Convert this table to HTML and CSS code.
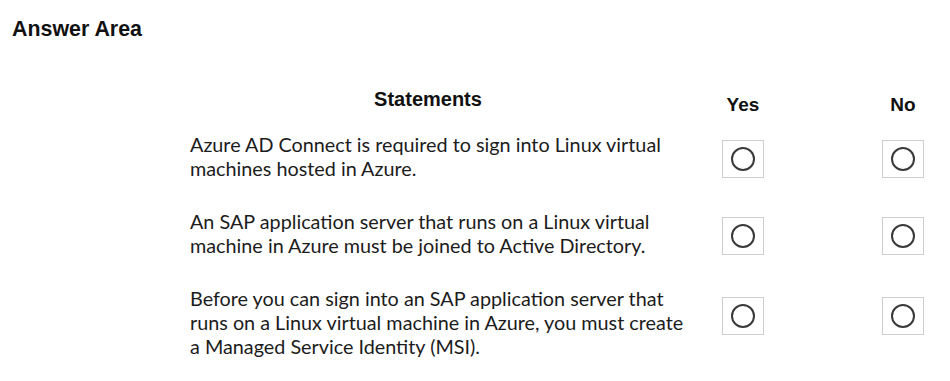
FILE: index.html
```html
<!DOCTYPE html>
<html lang="en">
<head>
	<meta charset="UTF-8">
	<title>Answer Area</title>
	<link rel="stylesheet" href="styles.css">
</head>
<body>

<div class="answer-area">
	<h1 class="title">Answer Area</h1>

	<div class="board">
		<!-- header row -->
		<div class="head statements">Statements</div>
		<div class="head choice">Yes</div>
		<div></div>
		<div class="head choice">No</div>

		<!-- statement 1 -->
		<p class="statement">Azure AD Connect is required to sign into Linux virtual<br>machines hosted in Azure.</p>
		<label class="radio-box"><span class="circle"></span></label>
		<div></div>
		<label class="radio-box"><span class="circle"></span></label>

		<!-- statement 2 -->
		<p class="statement">An SAP application server that runs on a Linux virtual<br>machine in Azure must be joined to Active Directory.</p>
		<label class="radio-box"><span class="circle"></span></label>
		<div></div>
		<label class="radio-box"><span class="circle"></span></label>

		<!-- statement 3 -->
		<p class="statement">Before you can sign into an SAP application server that<br>runs on a Linux virtual machine in Azure, you must create<br>a Managed Service Identity (MSI).</p>
		<label class="radio-box up"><span class="circle"></span></label>
		<div></div>
		<label class="radio-box up"><span class="circle"></span></label>
	</div>
</div>

</body>
</html>
```

FILE: styles.css
```css
body {
	margin: 0;
	background-color: #ffffff;
	color: #1c1c1c;
	font-family: "Liberation Sans", Arial, sans-serif;
}

.answer-area {
	padding: 17px 0 0 12px;
}

.title {
	font-size: 21.4px;
	font-weight: bold;
	line-height: 24px;
	margin: 0;
	color: #111;
}

.board {
	display: grid;
	grid-template-columns: 532px 42px 118px 42px;
	align-items: center;
	margin-top: 46px;
	margin-left: 178px;
	row-gap: 29px;
}

.head {
	font-weight: bold;
	line-height: 24px;
	color: #111;
	align-self: start;
}

.statements {
	font-size: 20px;
	width: 476px;
	text-align: center;
	margin-bottom: -8px;
}

.choice {
	font-size: 19px;
	text-align: center;
	margin-top: 6px;
	margin-bottom: -14px;
}

.statement {
	margin: 0;
	font-family: Lato, "Open Sans", sans-serif;
	font-size: 19.8px;
	line-height: 24px;
	white-space: nowrap;
	color: #1c1c1c;
}

.radio-box {
	display: flex;
	justify-content: center;
	align-items: center;
	width: 42px;
	height: 38px;
	box-sizing: border-box;
	border: 1px solid #cfcfcf;
	margin-top: 6px;
}

.radio-box.up {
	margin-top: 0;
	margin-bottom: 12px;
}

.circle {
	width: 20px;
	height: 20px;
	border: 2px solid #3a3a3a;
	border-radius: 50%;
}
```
